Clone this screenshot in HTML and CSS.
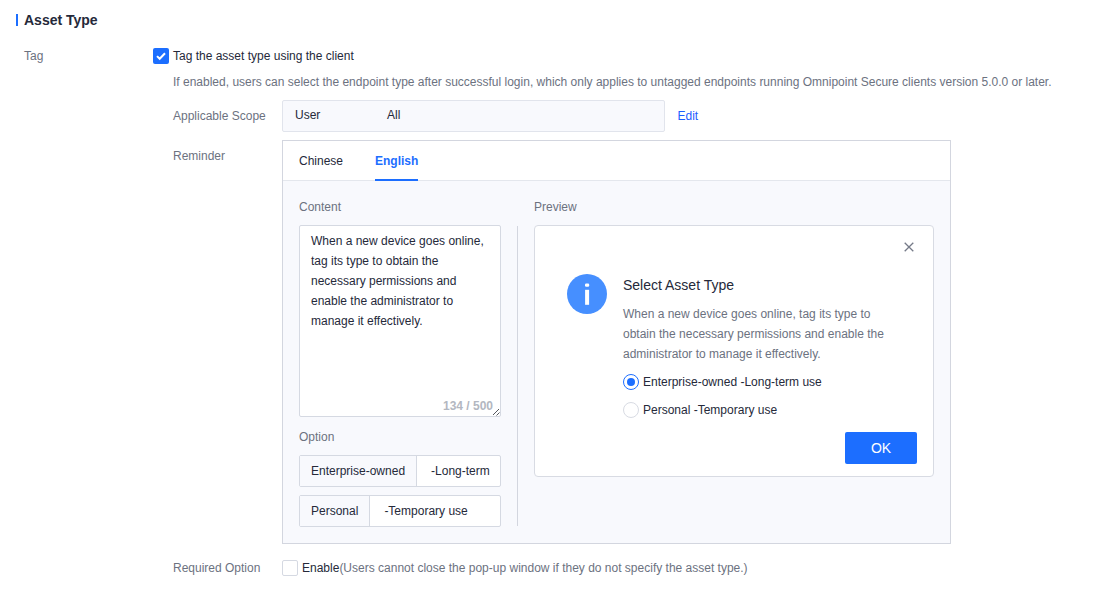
FILE: index.html
```html
<!DOCTYPE html>
<html lang="en">
<head>
    <meta charset="UTF-8">
    <meta name="viewport" content="width=device-width, initial-scale=1.0">
    <title>Asset Type</title>
    <link rel="stylesheet" href="styles.css">
</head>
<body>
    <div class="page">
        <h1 class="section-title">Asset Type</h1>

        <div class="form-row">
            <div class="form-label">Tag</div>
            <div class="form-content">
                <label class="check-row">
                    <span class="checkbox checked">
                        <svg width="16" height="16" viewBox="0 0 16 16"><path d="M4 8.1l2.7 2.7L12 5.3" fill="none" stroke="#fff" stroke-width="2"/></svg>
                    </span>
                    <span>Tag the asset type using the client</span>
                </label>

                <div class="sub-form">
                    <p class="hint">If enabled, users can select the endpoint type after successful login, which only applies to untagged endpoints running Omnipoint Secure clients version 5.0.0 or later.</p>

                    <!-- Scope -->
                    <div class="sub-row">
                        <div class="sub-label">Applicable Scope</div>
                        <div class="scope-box">
                            <span class="scope-name">User</span>
                            <span>All</span>
                        </div>
                        <a class="edit-link">Edit</a>
                    </div>

                    <!-- Reminder -->
                    <div class="sub-row">
                        <div class="sub-label">Reminder</div>
                        <div class="reminder">
                            <div class="tabs">
                                <div class="tab">Chinese</div>
                                <div class="tab active">English</div>
                            </div>
                            <div class="reminder-body">
                                <div class="editor">
                                    <div class="caption">Content</div>
                                    <div class="textarea-wrap">
                                        <textarea class="textarea" spellcheck="false">When a new device goes online, tag its type to obtain the necessary permissions and enable the administrator to manage it effectively.</textarea>
                                        <span class="counter">134 / 500</span>
                                        <svg class="grip" width="8" height="8" viewBox="0 0 8 8"><path d="M1 7L7 1M4.5 7.5L7.5 4.5" fill="none" stroke="#55585f" stroke-width="1"/></svg>
                                    </div>
                                    <div class="caption option-caption">Option</div>
                                    <div class="option">
                                        <span class="option-name">Enterprise-owned</span>
                                        <span class="option-value">-Long-term</span>
                                    </div>
                                    <div class="option">
                                        <span class="option-name">Personal</span>
                                        <span class="option-value">-Temporary use</span>
                                    </div>
                                </div>
                                <div class="divider"></div>
                                <div class="preview">
                                    <div class="caption">Preview</div>
                                    <div class="dialog">
                                        <div class="dialog-close">
                                            <svg width="10" height="10" viewBox="0 0 10 10"><path d="M0.7 0.7l8.6 8.6M9.3 0.7L0.7 9.3" fill="none" stroke="#757a88" stroke-width="1.3"/></svg>
                                        </div>
                                        <div class="dialog-main">
                                            <svg class="info-icon" width="40" height="40" viewBox="0 0 40 40">
                                                <circle cx="20" cy="20" r="20" fill="#468fff"/>
                                                <rect x="18" y="9.6" width="4.2" height="3.2" rx="1.2" fill="#fff"/>
                                                <rect x="18.1" y="15.8" width="4" height="15" fill="#fff"/>
                                            </svg>
                                            <div class="dialog-text">
                                                <h2 class="dialog-title">Select Asset Type</h2>
                                                <p class="dialog-desc">When a new device goes online, tag its type to obtain the necessary permissions and enable the administrator to manage it effectively.</p>
                                                <label class="radio-row"><span class="radio on"></span><span>Enterprise-owned -Long-term use</span></label>
                                                <label class="radio-row"><span class="radio"></span><span>Personal -Temporary use</span></label>
                                            </div>
                                        </div>
                                        <div class="dialog-footer">
                                            <button class="ok-button">OK</button>
                                        </div>
                                    </div>
                                </div>
                            </div>
                        </div>
                    </div>

                    <!-- Required option -->
                    <div class="sub-row required-row">
                        <div class="sub-label">Required Option</div>
                        <label class="check-row">
                            <span class="checkbox"></span>
                            <span>Enable<span class="muted">(Users cannot close the pop-up window if they do not specify the asset type.)</span></span>
                        </label>
                    </div>
                </div>
            </div>
        </div>
    </div>
</body>
</html>
```
FILE: styles.css
```css
* {
    box-sizing: border-box;
}
body {
    margin: 0;
    background-color: #fff;
    font-family: "Liberation Sans", Arial, sans-serif;
    font-size: 12px;
    line-height: 20px;
    color: #25293a;
}
h1, h2, p {
    margin: 0;
}
.page {
    padding: 10px 0 0 16px;
}
.section-title {
    display: flex;
    align-items: center;
    height: 20px;
    font-size: 14px;
    font-weight: bold;
}
.section-title::before {
    content: "";
    width: 2px;
    height: 12px;
    margin-right: 6px;
    background-color: #1c6eff;
}
.form-row {
    display: flex;
    margin-top: 16px;
    padding-left: 8px;
}
.form-label {
    width: 129px;
    color: #6c727f;
}
.check-row {
    display: flex;
    align-items: center;
    gap: 4px;
}
.checkbox {
    width: 16px;
    height: 16px;
    border: 1px solid #d5d9e2;
    border-radius: 2px;
    background-color: #fff;
}
.checkbox.checked {
    border: none;
    background-color: #1c6eff;
}
.checkbox svg {
    display: block;
}
.sub-form {
    padding-left: 20px;
}
.hint {
    margin: 6px 0 8px;
    color: #6c727f;
    white-space: nowrap;
}
.sub-row {
    display: flex;
    margin-bottom: 8px;
}
.sub-label {
    width: 109px;
    padding-top: 6px;
    color: #6c727f;
}
.scope-box {
    display: flex;
    width: 383px;
    height: 32px;
    padding: 4px 12px;
    border: 1px solid #e1e4ec;
    border-radius: 2px;
    background-color: #f8f9fd;
}
.scope-name {
    width: 92px;
}
.edit-link {
    margin: 6px 0 0 12.5px;
    color: #1c5eff;
}
.reminder {
    width: 669px;
    height: 404px;
    border: 1px solid #d3d6df;
    background-color: #f8f9fd;
}
.tabs {
    display: flex;
    gap: 32px;
    height: 40px;
    padding-left: 16px;
    border-bottom: 1px solid #e4e7ed;
    background-color: #fff;
}
.tab {
    height: 40px;
    line-height: 40px;
}
.tab.active {
    border-bottom: 2px solid #1c6eff;
    font-weight: bold;
    color: #1c6eff;
}
.reminder-body {
    display: flex;
    padding: 16px;
}
.editor {
    width: 202px;
}
.caption {
    margin-bottom: 8px;
    color: #6c727f;
}
.textarea-wrap {
    position: relative;
    height: 192px;
}
.textarea {
    display: block;
    width: 202px;
    height: 192px;
    padding: 5px 11px;
    border: 1px solid #d5d9e2;
    border-radius: 2px;
    outline: none;
    resize: none;
    overflow: hidden;
    background-color: #fff;
    font: inherit;
    color: inherit;
}
.counter {
    position: absolute;
    right: 8px;
    bottom: 1px;
    font-weight: bold;
    color: #b3b7c1;
}
.grip {
    position: absolute;
    right: 1px;
    bottom: 1px;
}
.option-caption {
    margin-top: 10px;
}
.option {
    display: flex;
    height: 32px;
    margin-bottom: 8px;
    border: 1px solid #d5d9e2;
    border-radius: 2px;
    background-color: #fff;
    line-height: 30px;
}
.option-name {
    padding: 0 11px;
    border-right: 1px solid #d5d9e2;
    background-color: #f8f9fd;
    white-space: nowrap;
}
.option-value {
    flex: 1;
    min-width: 0;
    padding-left: 14px;
    white-space: nowrap;
}
.divider {
    width: 1px;
    height: 300px;
    margin: 29px 16px 0;
    background-color: #d3d6df;
}
.dialog {
    width: 400px;
    height: 252px;
    border: 1px solid #d8dbe3;
    border-radius: 4px;
    background-color: #fff;
}
.dialog-close {
    display: flex;
    justify-content: flex-end;
    padding: 16px 19px 0 0;
    height: 48px;
}
.dialog-main {
    display: flex;
    gap: 16px;
    padding-left: 32px;
}
.dialog-title {
    height: 22px;
    font-size: 14px;
    font-weight: normal;
    line-height: 22px;
}
.dialog-desc {
    width: 280px;
    margin: 8px 0;
    color: #6c727f;
}
.radio-row {
    display: flex;
    align-items: center;
    gap: 4px;
    margin-bottom: 8px;
}
.radio {
    display: flex;
    align-items: center;
    justify-content: center;
    width: 16px;
    height: 16px;
    border: 1px solid #d8dbe3;
    border-radius: 50%;
}
.radio.on {
    border-color: #1c6eff;
}
.radio.on::before {
    content: "";
    width: 8px;
    height: 8px;
    border-radius: 50%;
    background-color: #1c6eff;
}
.dialog-footer {
    display: flex;
    justify-content: flex-end;
    padding: 4px 16px 0 0;
}
.ok-button {
    width: 72px;
    height: 32px;
    padding: 0;
    border: none;
    border-radius: 2px;
    background-color: #1c6eff;
    font-family: inherit;
    font-size: 14px;
    color: #fff;
}
.required-row {
    align-items: center;
    margin-top: 14px;
}
.required-row .sub-label {
    padding-top: 0;
}
.muted {
    color: #6c727f;
}
```
